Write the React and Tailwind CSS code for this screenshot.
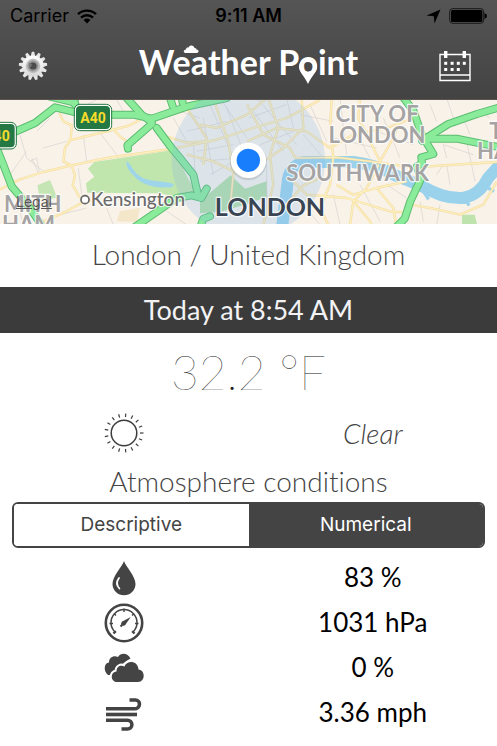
import { useState } from 'react'

const CASED_ROADS = [
  'M-10 150 L10 200 L35 265 L90 330 L130 390',
  'M30 108 L105 75 L165 28 L240 46',
  'M150 -4 L225 14',
  'M210 0 L235 32',
  'M320 50 L400 50 L455 62 L560 26 L680 0',
  'M380 0 L425 50 L455 72',
  'M455 78 L382 142 L384 152',
  'M470 90 L515 150 L540 180 L580 230 L594 290',
  'M620 272 L604 300 L575 292 L530 300 L400 390',
  'M600 390 L610 362 L630 355',
  'M1211 0 L1240 38 L1266 112 L1300 168 L1264 178 L1266 196 L1250 206 L1264 240 L1231 310 L1214 362 L1186 390',
  'M1266 128 L1345 78 L1431 48 L1500 28',
  'M1280 122 L1370 122 L1500 148',
  'M510 0 L518 24',
  'M545 0 L548 14',
]

const YELLOW_ROADS = [
  'M0 274 L60 244 L130 222 L215 202 L320 180 L520 152 L640 128',
  'M178 46 L190 70 L215 82 L212 125 L195 150 L190 190 L215 202 L225 232 L218 262 L240 300',
  'M205 128 L330 98 L390 82 L430 60',
  'M130 370 L200 340 L250 312 L300 300',
  'M335 90 L365 120 L385 132',
  'M480 110 L560 134 L640 128 L741 96 L860 60 L960 6',
  'M640 0 L660 60 L685 130 L700 230 L690 330',
  'M560 30 L620 120 L610 200',
  'M560 170 L640 190 L741 240',
  'M600 80 L650 90 L741 50 L800 0',
  'M741 20 L790 110 L870 150 L886 180',
  'M741 130 L830 90 L920 100 L990 150',
  'M805 0 L835 90 L810 170 L820 260 L790 380',
  'M760 210 L850 150 L910 90 L905 0',
  'M886 180 L1010 178 L1110 190 L1240 208 L1491 192',
  'M995 6 L990 90 L1000 178 L990 260 L960 330 L985 380',
  'M990 150 L1060 110 L1160 90 L1240 60',
  'M1080 0 L1075 60 L1110 130 L1140 190',
  'M1140 190 L1180 120 L1210 40',
  'M1136 200 L1100 270 L1060 310 L1050 380',
  'M1010 260 L1060 290 L1130 270 L1220 250',
  'M1060 310 L1110 370 L1120 390',
  'M880 250 L920 290 L1040 300 L1170 340 L1220 344',
  'M850 330 L910 262 L960 240',
  'M1230 320 L1300 332 L1380 350 L1450 320 L1491 250',
  'M1130 270 L1180 330 L1190 390',
]

const STREETS = [
  'M60 110 L80 180 L130 220', 'M95 180 L115 225 M90 190 L110 180 L118 222',
  'M110 100 L150 60', 'M130 150 L200 130', 'M250 110 L260 190', 'M300 105 L350 170',
  'M30 230 L80 160', 'M235 210 L245 290', 'M260 20 L300 0', 'M350 5 L370 40',
  'M520 60 L560 130', 'M540 40 L600 60', 'M580 130 L585 220', 'M610 60 L640 230',
  'M630 20 L700 180', 'M680 30 L741 190', 'M560 100 L680 70', 'M590 160 L700 140',
  'M600 190 L720 180', 'M630 230 L741 170', 'M660 0 L741 120', 'M745 60 L860 20',
  'M770 0 L890 140', 'M780 140 L880 100', 'M760 40 L850 160', 'M860 0 L880 90',
  'M800 200 L800 360', 'M910 110 L970 180', 'M930 20 L980 130', 'M900 50 L1000 70',
  'M1020 0 L1040 170', 'M1060 90 L1110 180', 'M1000 120 L1130 150', 'M1150 60 L1200 180',
  'M1130 100 L1240 140', 'M1290 20 L1310 70', 'M1330 140 L1340 180', 'M1330 140 L1420 170',
  'M1340 0 L1360 60', 'M1390 60 L1410 110', 'M1340 200 L1350 260', 'M1310 230 L1330 200',
  'M900 310 L960 380', 'M1000 290 L1020 380', 'M1080 260 L1140 370', 'M1160 260 L1220 300',
  'M1260 310 L1270 370', 'M1320 320 L1310 380', 'M1400 130 L1425 250', 'M1440 40 L1470 60',
  'M60 340 L70 380', 'M180 350 L260 330', 'M320 330 L340 380', 'M500 340 L560 380',
]

const AREA_LABELS = [
  { text: 'MITH', x: 12, y: 342, anchor: 'start' },
  { text: 'HAM', x: 6, y: 402, anchor: 'start' },
  { text: 'CITY OF', x: 1131, y: 71, anchor: 'middle' },
  { text: 'LONDON', x: 1131, y: 134, anchor: 'middle' },
  { text: 'SOUTHWARK', x: 1073, y: 248, anchor: 'middle' },
  { text: 'T', x: 1468, y: 122, anchor: 'start' },
  { text: 'HA', x: 1431, y: 182, anchor: 'start' },
]

const READINGS = [
  { name: 'Humidity', value: '83 %', Icon: DropIcon },
  { name: 'Pressure', value: '1031 hPa', Icon: GaugeIcon },
  { name: 'Cloudiness', value: '0 %', Icon: CloudsIcon },
  { name: 'Wind', value: '3.36 mph', Icon: WindIcon },
]

function spokes(count) {
  return Array.from({ length: count }, (_, i) => (i * 360) / count)
}

function GearIcon() {
  return (
    <svg width="30" height="30" viewBox="0 0 30 30" aria-hidden="true">
      <defs>
        <linearGradient id="gear" x1="0" y1="0" x2="0" y2="1">
          <stop offset="0" stopColor="#ffffff" />
          <stop offset="1" stopColor="#d8d8d8" />
        </linearGradient>
      </defs>
      {spokes(13).map(a => (
        <path key={a} d="M12.7 5.5 L13.8 .8 h2.4 L17.3 5.5 Z" fill="#e6e6e6" transform={`rotate(${a} 15 15)`} />
      ))}
      <circle cx="15" cy="15" r="10.6" fill="url(#gear)" />
      <circle cx="15" cy="15" r="7.2" fill="#bdbdbd" />
      <circle cx="15" cy="15" r="5.4" fill="#979797" />
      <circle cx="15" cy="15" r="3.6" fill="#4c4c4c" />
      <path d="M11 12 l3 1 l-1 3 l-2 1 Z" fill="#777" />
    </svg>
  )
}

function CalendarIcon() {
  return (
    <svg width="32" height="32" viewBox="0 0 32 32" fill="#fff" aria-hidden="true">
      <path d="M1 4.5 H31 V30.5 H1 Z M1 25 H31" fill="none" stroke="#fff" strokeWidth="1.4" />
      <rect x="5" y="1" width="3.4" height="7" />
      <rect x="23.6" y="1" width="3.4" height="7" />
      {[5.2, 11.6, 17.8, 23.8].map(x => <rect key={x} x={x} y="11.8" width="3" height="3" />)}
      {[5.2, 11.6, 17.8].map(x => <rect key={x} x={x} y="18" width="3" height="3" />)}
    </svg>
  )
}

function SunIcon() {
  return (
    <svg width="40" height="40" viewBox="0 0 40 40" fill="none" stroke="#3d3d3d" aria-hidden="true">
      <circle cx="20" cy="20" r="12.8" strokeWidth="1.5" />
      {spokes(17).map(a => (
        <path key={a} d="M36 20 H39.5" strokeWidth="1.2" transform={`rotate(${a} 20 20)`} />
      ))}
    </svg>
  )
}

function DropIcon() {
  return (
    <svg width="40" height="40" viewBox="0 0 40 40" aria-hidden="true">
      <path d="M20 3 C22 9 31.5 18 31.5 26 A11.5 11.3 0 0 1 8.5 26 C8.5 18 18 9 20 3 Z" fill="#444" />
      <path d="M15 20 C12.4 23.5 12.6 27.5 15.4 30.5" fill="none" stroke="#fff" strokeWidth="1.8" strokeLinecap="round" />
    </svg>
  )
}

function GaugeIcon() {
  return (
    <svg width="40" height="40" viewBox="0 0 40 40" fill="none" stroke="#444" aria-hidden="true">
      <circle cx="20" cy="20" r="18.2" strokeWidth="2.6" />
      <path d="M11 29 A13 13 0 1 1 29 29" strokeWidth="1.5" />
      <path d="M11.8 28.2 L9.5 30.5 M28.2 28.2 L30.5 30.5" strokeWidth="2.4" />
      <path d="M5.5 20.5 H9 M31 20.5 H34.5 M20 5.5 V9 M10 10.5 L12 12.5 M30 10.5 L28 12.5" strokeWidth="1.4" />
      <path d="M26.8 14 L21.5 21.5 L18.3 18.6 Z" fill="#444" stroke="none" />
      <circle cx="19.5" cy="20.5" r="2.3" fill="#444" stroke="none" />
      <path d="M19 21 L16.5 23.5" strokeWidth="2" />
    </svg>
  )
}

function CloudsIcon() {
  return (
    <svg width="40" height="40" viewBox="0 0 40 40" fill="#444" aria-hidden="true">
      <path d="M4 27 C-1 23 0 15 5 14.500 C5 9 10 7 14 9 C17 4 24 5 26.500 10.500 C24 12 20 14 18 17 H9 Z M5 14.500 L14 9 L20 17 L9 27 H4 Z" />
      <path
        d="M13.5 34 C6 34 6 24 12.5 23.5 C12.5 18 17 16.5 20.5 18.5 C22.5 12 34 12 34.5 21.5 C41.5 22 41.5 34 34 34 Z"
        stroke="#fff" strokeWidth="4" paintOrder="stroke"
      />
    </svg>
  )
}

function WindIcon() {
  return (
    <svg width="40" height="40" viewBox="0 0 40 40" fill="none" stroke="#444" strokeWidth="3.6" aria-hidden="true">
      <path d="M2 15.8 H30.5 A5 5 0 0 0 35.5 11 A4 4 0 0 0 31.5 7 H25.5" />
      <path d="M2 21.5 H33" />
      <path d="M2 27.2 H23.5 A4.4 4.4 0 0 1 23.5 36 H17.5" />
    </svg>
  )
}

function StatusBar() {
  return (
    <div className="grid h-8 grid-cols-3 items-center px-2.5 font-['Inter',sans-serif] text-lg font-normal text-black">
      <div className="flex items-center gap-2">
        <span>Carrier</span>
        <svg width="20" height="15" viewBox="0 0 20 15" fill="none" stroke="#000" strokeWidth="2.4" aria-hidden="true">
          <path d="M1 5.2 A13 13 0 0 1 19 5.2 M4 8.6 A8.8 8.8 0 0 1 16 8.6" />
          <path d="M10 14.5 L6.6 11 A4.8 4.8 0 0 1 13.4 11 Z" fill="#000" stroke="none" />
        </svg>
      </div>
      <time className="text-center font-semibold whitespace-nowrap">9:11 AM</time>
      <div className="flex items-center justify-end gap-2">
        <svg width="15" height="15" viewBox="0 0 15 15" aria-hidden="true">
          <path d="M14.5 .5 L8.5 14.5 L7.8 7.2 L.5 6.5 Z" />
        </svg>
        <svg width="38" height="16" viewBox="0 0 38 16" aria-hidden="true">
          <rect x=".7" y=".7" width="34" height="14.6" rx="3" fill="none" stroke="#171717" />
          <rect x="2" y="2" width="31.4" height="12" rx="1.5" />
          <path d="M35.5 5 Q38 6 38 8 T35.5 11 Z" />
        </svg>
      </div>
    </div>
  )
}

function Title() {
  return (
    <h1 className="pb-2 font-['Lato',sans-serif] text-[34px] leading-10 font-bold whitespace-nowrap text-white">
      We
      <span className="relative">
        a
        <svg className="absolute -left-2 top-1" width="16" height="8" viewBox="0 0 16 8" fill="#fff" aria-hidden="true">
          <path d="M3 8 C0 8 0 5 3 4.6 C3 2.5 4.5 2.2 5.5 2.6 C7 -.5 11 .2 11.5 3 C13 2.8 13.5 4 13.5 4.6 C16.5 5 16 8 13.5 8 Z" />
        </svg>
      </span>
      ther P
      <span className="relative">
        o
        <svg className="absolute left-0 top-4" width="20" height="27" viewBox="0 0 20 27" fill="#fff" aria-hidden="true">
          <path
            fillRule="evenodd"
            d="M10 1 A9 9 0 0 1 19 10 C19 15 13 20 10 27 C7 20 1 15 1 10 A9 9 0 0 1 10 1 Z M10 5 A5 5 0 1 0 10 15 A5 5 0 1 0 10 5 Z"
          />
        </svg>
      </span>
      int
    </h1>
  )
}

function LondonMap() {
  return (
    <div className="relative overflow-hidden border-t border-[#5b5450]">
      <svg
        className="block h-[124px] w-full font-['Lato',sans-serif]"
        viewBox="0 6 1491 372"
        preserveAspectRatio="xMidYMid slice"
        role="img"
        aria-label="Map of London"
      >
        <rect width="1491" height="390" fill="#f8f2e9" />
        <path d="M283 192 L520 156 L548 210 L590 290 L540 300 L480 286 L262 284 L258 256 L283 236 L264 212 Z" fill="#c0e6ae" />
        <path d="M112 262 L150 246 L172 300 L120 304 Z" fill="#c5e6b4" />
        <path d="M360 340 L420 330 L410 372 L350 370 Z" fill="#f4e6c8" />
        <path d="M1386 350 L1424 350 L1434 390 L1386 390 Z" fill="#bfe3ad" />
        <path d="M600 310 L692 232 L735 272 L800 250 L802 296 L741 318 L660 342 L600 346 Z" fill="#b5dfaa" />
        <path d="M378 190 C392 194 396 216 414 230 C440 254 480 244 522 258 L516 268 C470 272 430 262 408 240 C390 222 380 212 378 190 Z" fill="#9fd5ea" />
        <path
          d="M846 390 L862 260 Q864 206 912 192 L1060 192 Q1130 200 1190 234 L1262 262 Q1330 304 1390 300 Q1440 290 1464 240 L1500 200"
          fill="none" stroke="#9ad2ec" strokeWidth="36" strokeLinejoin="round"
        />
        <path d="M1270 280 L1286 304 M1390 300 L1408 322 M1464 270 L1482 280" stroke="#9ad2ec" strokeWidth="10" />
        <g fill="none" stroke="#d6d2cf" strokeWidth="2">
          {STREETS.map(d => <path key={d} d={d} />)}
        </g>
        <g fill="none" strokeLinejoin="round">
          {YELLOW_ROADS.map(d => <path key={d} d={d} stroke="#f3d898" strokeWidth="7" />)}
          {YELLOW_ROADS.map(d => <path key={d} d={d} stroke="#fdf0bf" strokeWidth="4" />)}
        </g>
        <g fill="none" strokeLinejoin="round" strokeLinecap="round">
          {CASED_ROADS.map(d => <path key={d} d={d} stroke="#5bbd70" strokeWidth="24" />)}
          {CASED_ROADS.map(d => <path key={d} d={d} stroke="#8aec9a" strokeWidth="18" />)}
        </g>
        <circle cx="745" cy="187" r="230" fill="#7fb0ea" fillOpacity=".22" />

        <g stroke="#fff" strokeWidth="4">
          <rect x="226" y="22" width="106" height="73" rx="14" fill="#237843" />
          <rect x="-60" y="76" width="106" height="74" rx="14" fill="#237843" />
        </g>
        <g fill="none" stroke="#237843" strokeWidth="3">
          <rect x="223" y="19" width="112" height="79" rx="16" />
          <rect x="-63" y="73" width="112" height="80" rx="16" />
        </g>
        <g fill="#f8dc2c" fontSize="42" fontWeight="700" className="font-['Roboto',sans-serif]">
          <text x="279" y="74" textAnchor="middle">A40</text>
          <text x="29" y="129" textAnchor="end">40</text>
        </g>

        <g stroke="#fff" strokeOpacity=".8" strokeWidth="7" strokeLinejoin="round" paintOrder="stroke">
          {AREA_LABELS.map(l => (
            <text key={l.text + l.y} x={l.x} y={l.y} textAnchor={l.anchor} fontSize="66" fontWeight="700" fill="#a5a3a3">{l.text}</text>
          ))}
          <text x="272" y="323" fontSize="57" fontWeight="500" fill="#6b6b6b">Kensington</text>
          <text x="810" y="355" fontSize="75" fontWeight="700" textAnchor="middle" fill="#3a4554">LONDON</text>
        </g>
        <circle cx="255" cy="305" r="12" fill="#fff" stroke="#666" strokeWidth="5" />

        <circle cx="745" cy="191" r="56" fill="#345" fillOpacity=".15" />
        <circle cx="745" cy="187" r="53" fill="#fff" />
        <circle cx="745" cy="187" r="35" fill="#187efb" />
      </svg>
      <a href="#legal" className="absolute bottom-3 left-4 font-['Inter',sans-serif] text-sm font-normal text-[#555] underline">Legal</a>
    </div>
  )
}

function Segmented({ value, onChange }) {
  return (
    <div className="mx-3 flex h-[46px] overflow-hidden rounded-md border-2 border-[#444] font-['Inter',sans-serif] text-[19px] font-normal">
      {['Descriptive', 'Numerical'].map(option => (
        <button
          key={option}
          type="button"
          aria-pressed={value === option}
          onClick={() => onChange(option)}
          className={value === option ? 'flex-1 bg-[#444] text-white' : 'flex-1 bg-white text-[#444]'}
        >
          {option}
        </button>
      ))}
    </div>
  )
}

export default function App() {
  const [mode, setMode] = useState('Numerical')

  return (
    <div className="min-h-screen bg-white font-['Lato',sans-serif] text-[28px] font-light [font-variant-ligatures:none]">
      <header className="bg-linear-to-b from-[#555] to-[#434343]">
        <StatusBar />
        <div className="grid h-[67px] grid-cols-[1fr_auto_1fr] items-center px-[18px]">
          <button type="button" aria-label="Settings" className="justify-self-start"><GearIcon /></button>
          <Title />
          <button type="button" aria-label="Calendar" className="mr-2 justify-self-end"><CalendarIcon /></button>
        </div>
      </header>

      <LondonMap />

      <main className="text-center">
        <p className="flex h-[63px] items-center justify-center pb-1 text-[#444]">London / United Kingdom</p>
        <h2 className="flex h-[46px] items-center justify-center bg-[#3b3b3b] text-[27px] font-normal text-[#f2f2f4]">Today at 8:54 AM</h2>
        <p className="flex h-[78px] items-center justify-center text-5xl font-thin text-[#222]">32.2 °F</p>
        <div className="grid h-11 grid-cols-2 place-items-center">
          <SunIcon />
          <span className="text-[#444] italic">Clear</span>
        </div>
        <h3 className="flex h-[47px] items-end justify-center text-[#444]">Atmosphere conditions</h3>
        <Segmented value={mode} onChange={setMode} />
        <dl className="pt-[7px]">
          {READINGS.map(({ name, value, Icon }) => (
            <div key={name} className="grid h-[45px] grid-cols-2 place-items-center text-[26px] font-normal text-black">
              <dt aria-label={name}><Icon /></dt>
              <dd>{value}</dd>
            </div>
          ))}
        </dl>
      </main>
    </div>
  )
}
